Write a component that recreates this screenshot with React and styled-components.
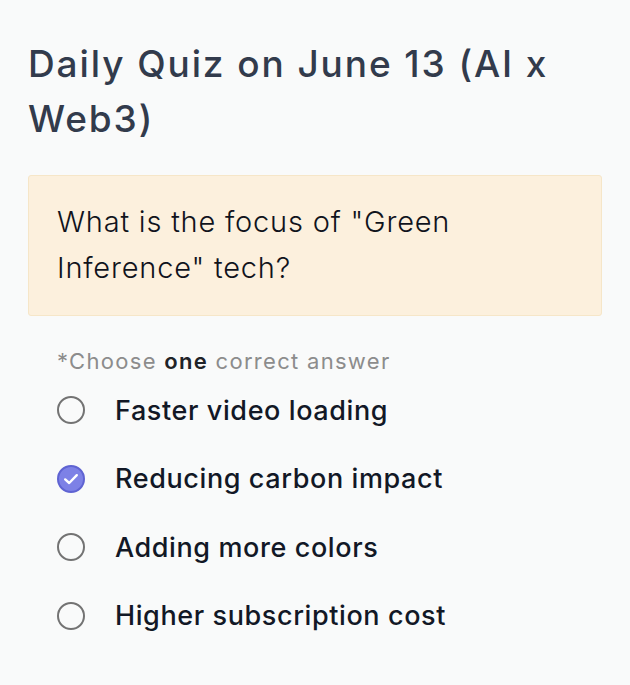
import React, { useState } from "react";
import styled, { createGlobalStyle } from "styled-components";

const GlobalStyle = createGlobalStyle`
  html, body {
    margin: 0;
    padding: 0;
    background: #f9fafa;
  }
  body {
    font-family: Inter, "Noto Sans", sans-serif;
  }
`;

const options = [
  "Faster video loading",
  "Reducing carbon impact",
  "Adding more colors",
  "Higher subscription cost",
];

const App = () => {
  const [picked, setPicked] = useState(1);
  return (
    <>
      <GlobalStyle />
      <Page>
        <Title>Daily Quiz on June 13 (AI x Web3)</Title>
        <QuestionCard>
          What is the focus of "Green Inference" tech?
        </QuestionCard>
        <Answers>
          <Hint>
            *Choose <b>one</b> correct answer
          </Hint>
          {options.map((text, i) => (
            <OptionRow key={text} onClick={() => setPicked(i)}>
              <Radio checked={picked === i}>
                {picked === i && (
                  <svg width="24" height="24" viewBox="0 0 24 24">
                    <path
                      d="M6.2 12.4 L10.2 16 L17.8 8.2"
                      fill="none"
                      stroke="#fff"
                      strokeWidth="2.4"
                      strokeLinecap="round"
                      strokeLinejoin="round"
                    />
                  </svg>
                )}
              </Radio>
              <OptionText>{text}</OptionText>
            </OptionRow>
          ))}
        </Answers>
      </Page>
    </>
  );
};

export default App;

const Page = styled.div`
  display: flex;
  flex-direction: column;
  padding: 36px 28px 0 28px;
  width: 574px;
`;

const Title = styled.h1`
  margin: 0;
  font-size: 37px;
  line-height: 55px;
  font-weight: 500;
  color: #323b4c;
  letter-spacing: 1.9px;
`;

const QuestionCard = styled.div`
  margin-top: 29px;
  background: #fcf0dd;
  border: 1px solid #f6e6c8;
  border-radius: 3px;
  padding: 23px 40px 24px 28px;
  font-size: 29px;
  line-height: 46px;
  font-weight: 300;
  color: #10131c;
  letter-spacing: 0.8px;
`;

const Answers = styled.div`
  display: flex;
  flex-direction: column;
  margin-top: 30px;
  padding-left: 29px;
`;

const Hint = styled.div`
  font-size: 22px;
  line-height: 30px;
  color: #8c8c8c;
  letter-spacing: 1.3px;
  b {
    font-weight: 600;
    color: #1f2328;
  }
`;

const OptionRow = styled.div`
  display: flex;
  align-items: center;
  height: 68.5px;
  cursor: pointer;
`;

const Radio = styled.span`
  box-sizing: border-box;
  width: 28px;
  height: 28px;
  border-radius: 50%;
  flex-shrink: 0;
  display: flex;
  align-items: center;
  justify-content: center;
  border: 2px solid ${({ checked }) => (checked ? "#5f63d2" : "#737373")};
  background: ${({ checked }) => (checked ? "#7d81e6" : "transparent")};
`;

const OptionText = styled.span`
  margin-left: 30px;
  font-size: 27px;
  font-weight: 500;
  color: #121826;
  letter-spacing: 0.6px;
`;
